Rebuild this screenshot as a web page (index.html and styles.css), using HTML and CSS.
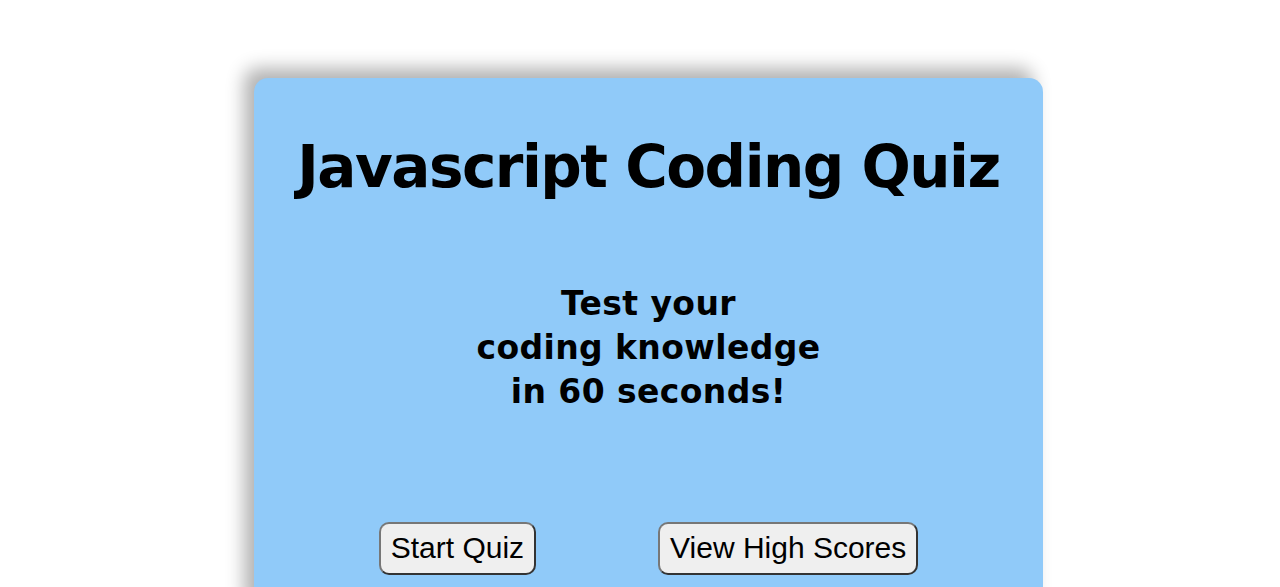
FILE: index.html
```html
<!DOCTYPE html>
<html lang="en">
<head>
<meta charset="utf-8">
<title>Javascript Coding Quiz</title>
<link rel="stylesheet" href="styles.css">
</head>
<body>
<main class="card">
  <h1 class="title">Javascript Coding Quiz</h1>
  <p class="intro">Test your<br>coding knowledge<br>in 60 seconds!</p>
  <div class="actions">
    <button class="btn" type="button">Start Quiz</button>
    <button class="btn" type="button">View High Scores</button>
  </div>
</main>
</body>
</html>
```
FILE: styles.css
```css
html, body {
  margin: 0;
  padding: 0;
  background: #ffffff;
}
body {
  font-family: "DejaVu Sans", sans-serif;
  height: 587px;
  overflow: hidden;
}
.card {
  box-sizing: border-box;
  width: 789px;
  height: 540px;
  margin: 78px 0 0 254px;
  padding-top: 55px;
  background: #90caf9;
  border-radius: 14px;
  box-shadow: -10px -10px 18px rgba(0, 0, 0, 0.3);
  display: flex;
  flex-direction: column;
  align-items: center;
}
.title {
  margin: 0;
  font-size: 58px;
  line-height: 1.2;
  font-weight: bold;
  letter-spacing: -1.5px;
  color: #000;
  text-align: center;
}
.intro {
  margin: 79px 0 0;
  font-size: 33px;
  line-height: 44px;
  font-weight: bold;
  letter-spacing: 0.4px;
  color: #000;
  text-align: center;
}
.actions {
  margin-top: 108px;
  display: flex;
  gap: 122px;
  justify-content: center;
}
.btn {
  font-family: "Liberation Sans", Arial, sans-serif;
  font-size: 30px;
  color: #000;
  background: #efefef;
  padding: 7px 10px 8px;
  border: 2px solid;
  border-color: #777 #333 #333 #777;
  border-radius: 10px;
}
```
